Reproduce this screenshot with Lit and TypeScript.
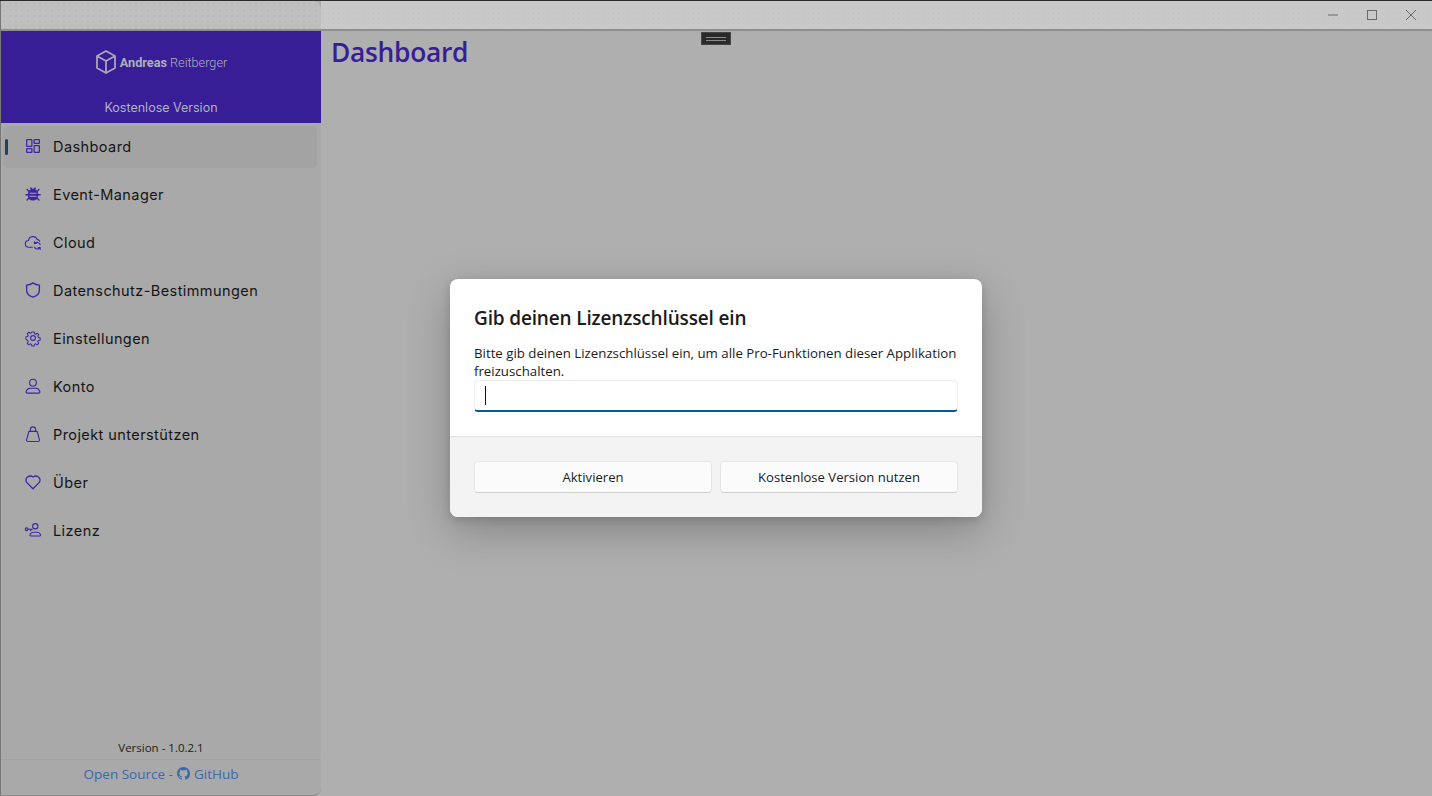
import { LitElement, html, css, svg } from "lit";
import { customElement } from "lit/decorators.js";

const icons: Record<string, unknown> = {
  dashboard: svg`<g stroke-width="1.700"><rect x="3.500" y="3.500" width="7" height="9" rx=".8"/><rect x="13.500" y="3.500" width="7" height="5" rx=".8"/><rect x="3.500" y="15.500" width="7" height="5" rx=".8"/><rect x="13.500" y="11.500" width="7" height="9" rx=".8"/></g>`,
  bug: svg`<g stroke-width="1.800"><path d="M4 6l3 3M20 6l-3 3M2.500 13H6M21.500 13H18M4 20l3-3M20 20l-3-3M9 4l1.500 2M15 4l-1.500 2"/></g><path class="fill" d="M12 5.500c3.500 0 6 2.800 6 6.500v2c0 3.600-2.500 6-6 6s-6-2.400-6-6v-2c0-3.700 2.500-6.500 6-6.500z"/><path stroke="#a9a9a9" stroke-width="1.500" d="M8 11h8M8 15h8"/>`,
  cloud: svg`<path d="M11 19H6.500A4.500 4.500 0 0 1 6 10a6 6 0 0 1 11.500-1.500A4.500 4.500 0 0 1 21 11"/><path d="M21.500 15.500a4 4 0 0 0-7-1.500M14 19a4 4 0 0 0 7 .5"/><path d="M14 11.500V14h2.500M21.500 22v-2.500H19"/>`,
  shield: svg`<path d="M12 2.500c2.500 2 5.500 3 8.500 3v6c0 5-3.500 8.500-8.500 10-5-1.500-8.500-5-8.500-10v-6c3 0 6-1 8.500-3z" stroke-width="1.800"/>`,
  gear: svg`<circle cx="12" cy="12" r="3.200"/><path d="M10.300 3h3.400l.5 2.600 1.800.8 2.200-1.500 2.400 2.400-1.500 2.200.8 1.800 2.600.5v3.400l-2.600.5-.8 1.800 1.500 2.200-2.400 2.400-2.200-1.500-1.800.8-.5 2.600h-3.400l-.5-2.600-1.800-.8-2.200 1.500-2.400-2.400 1.500-2.200-.8-1.800L1.500 13.700v-3.400l2.600-.5.800-1.800-1.500-2.200 2.400-2.400 2.200 1.500 1.800-.8z" transform="translate(1.200 1.200) scale(.9)"/>`,
  user: svg`<circle cx="12" cy="7.500" r="4.500"/><path d="M5 21.500c-2 0-2.500-1-2-2.500 .8-2.500 3-4 5.500-4h7c2.500 0 4.700 1.500 5.500 4 .5 1.500 0 2.500-2 2.500z"/>`,
  bag: svg`<path d="M6.500 8.500h11l3 11c.4 1.500-.5 2.500-2 2.500h-13c-1.500 0-2.400-1-2-2.500z"/><path d="M8.500 8.500V6a3.500 3.500 0 0 1 7 0v2.500"/>`,
  heart: svg`<path d="M12 21 3.500 12.500A5.600 5.600 0 0 1 12 5.500a5.600 5.600 0 0 1 8.500 7z" stroke-width="1.700"/>`,
  license: svg`<circle cx="15" cy="7" r="3.500"/><path d="M9.500 20c-1.500 0-2-1-1.500-2 .8-2 2.500-3 4.500-3h5c2 0 3.700 1 4.500 3 .5 1 0 2-1.500 2z"/><circle cx="3.500" cy="11" r="1.800"/><path d="M5.500 11h5.500M9 11v2"/>`,
};

const items: [string, string][] = [
  ["dashboard", "Dashboard"],
  ["bug", "Event-Manager"],
  ["cloud", "Cloud"],
  ["shield", "Datenschutz-Bestimmungen"],
  ["gear", "Einstellungen"],
  ["user", "Konto"],
  ["bag", "Projekt unterstützen"],
  ["heart", "Über"],
  ["license", "Lizenz"],
];

@customElement("app-root")
export class AppRoot extends LitElement {
  static styles = css`
    :host {
      display: block;
      position: relative;
      width: 1432px;
      height: 796px;
      overflow: hidden;
      background: #afafaf;
      font-family: "Open Sans", "Liberation Sans", sans-serif;
      color: #1a1a1a;
      box-sizing: border-box;
      border-top: 1px solid #2b2b2b;
    }
    .shell { display: flex; height: 795px; }
    .sidebar {
      width: 321px;
      flex: none;
      box-sizing: border-box;
      display: flex;
      flex-direction: column;
      background: #a9a9a9;
      border-left: 1px solid #777;
      border-bottom: 1px solid #8a8a8a;
      border-radius: 0 8px 8px 0;
      overflow: hidden;
    }
    .dragstrip {
      height: 28px;
      flex: none;
      background-color: #bfbfbf;
      background-image: radial-gradient(#b2b2b2 0.6px, transparent 0.8px);
      background-size: 6px 6px;
      border-bottom: 2px solid #8f8f8f;
    }
    .brand {
      height: 92px;
      flex: none;
      box-sizing: border-box;
      background: #371e96;
      display: flex;
      flex-direction: column;
      align-items: center;
      padding-top: 17px;
    }
    .logo {
      display: flex;
      align-items: center;
      gap: 3px;
      height: 28px;
      font-family: Roboto, sans-serif;
      font-size: 12.700px;
      color: #b0afb8;
      font-weight: 300;
    }
    .logo svg { width: 22px; height: 26px; fill: none; stroke: #a9a8b4; stroke-width: 1.800; stroke-linejoin: round; }
    .logo b { font-weight: 700; margin-right: 3px; }
    .plan {
      margin-top: 23px;
      font-family: Inter, sans-serif;
      font-size: 12.500px;
      line-height: 18px;
      color: #b3b1c2;
    }
    nav {
      flex: 1;
      display: flex;
      flex-direction: column;
      gap: 6px;
      padding: 3px 4px 0 2px;
    }
    .item {
      position: relative;
      display: flex;
      align-items: center;
      height: 42px;
      box-sizing: border-box;
      padding: 0 0 2px 21px;
      border-radius: 5px;
      font-family: Inter, sans-serif;
      font-size: 14.500px;
      letter-spacing: 0.420px;
      color: #151515;
    }
    .item.active { background: #a3a3a3; }
    .item.active::before {
      content: "";
      position: absolute;
      left: 2px;
      top: 13px;
      width: 3px;
      height: 16px;
      border-radius: 2px;
      background: #1a4466;
    }
    .item svg {
      width: 18px;
      height: 18px;
      flex: none;
      margin-right: 11px;
      fill: none;
      stroke: #3f25a5;
      stroke-width: 1.500;
      stroke-linecap: round;
      stroke-linejoin: round;
    }
    .item svg .fill { fill: #3f25a5; }
    .version {
      text-align: center;
      font-size: 11.500px;
      line-height: 16px;
      padding-bottom: 3px;
      color: #1c1c1c;
      border-bottom: 1px solid #a2a2a2;
    }
    .source {
      height: 35px;
      flex: none;
      display: flex;
      align-items: center;
      justify-content: center;
      padding-bottom: 8px;
      box-sizing: border-box;
      gap: 4px;
      font-size: 13.500px;
      color: #3c68ad;
    }
    .source svg { width: 13px; height: 13px; fill: #3c68ad; }
    .main { flex: 1; display: flex; flex-direction: column; min-width: 0; }
    .titlebar {
      height: 28px;
      flex: none;
      display: flex;
      justify-content: flex-end;
      align-items: center;
      padding-right: 2px;
      background-color: #c9c9c9;
      background-image: radial-gradient(#c2c2c2 0.6px, transparent 0.8px);
      background-size: 5px 5px;
      border-bottom: 2px solid #8f8f8f;
    }
    .wc { width: 39px; height: 28px; display: flex; align-items: center; justify-content: center; }
    .wc svg { width: 12px; height: 12px; fill: none; stroke: #6a6a6a; stroke-width: 1; }
    .content { flex: 1; position: relative; padding: 3px 10px; }
    h1 {
      margin: 0;
      font-family: "Open Sans", sans-serif;
      font-size: 26.400px;
      line-height: 36px;
      font-weight: 600;
      letter-spacing: -0.300px;
      color: #371e96;
    }
    .grip {
      position: absolute;
      left: 380px;
      top: 1px;
      width: 28px;
      height: 11px;
      background: #2a2a2a;
      border: 1px solid #444;
      display: flex;
      align-items: center;
      justify-content: center;
    }
    .grip i { display: block; width: 20px; height: 2px; border-top: 1px solid #8c8c8c; border-bottom: 1px solid #8c8c8c; }
    .overlay {
      position: absolute;
      inset: -1px 0 0 0;
      display: flex;
      align-items: center;
      justify-content: center;
    }
    .dialog {
      width: 532px;
      height: 238px;
      border-radius: 8px;
      overflow: hidden;
      display: flex;
      flex-direction: column;
      background: #fff;
      box-shadow: 0 14px 44px rgba(0, 0, 0, 0.24), 0 3px 10px rgba(0, 0, 0, 0.14);
    }
    .body {
      flex: 1;
      padding: 24px 24px 0;
      box-sizing: border-box;
      border-bottom: 1px solid #e3e3e3;
    }
    h2 {
      margin: 0 0 11px;
      font-size: 19px;
      line-height: 30px;
      font-weight: 600;
      color: #1b1b1b;
      letter-spacing: -0.150px;
    }
    p {
      margin: 0;
      font-size: 13.250px;
      line-height: 18px;
      color: #1b1b1b;
    }
    .input {
      position: relative;
      height: 32px;
      box-sizing: border-box;
      border: 1px solid #ededed;
      border-bottom: 2px solid #005a9e;
      border-radius: 4px;
    }
    .caret {
      position: absolute;
      left: 10px;
      top: 5px;
      width: 1px;
      height: 19px;
      background: #111;
    }
    .foot {
      height: 80px;
      flex: none;
      box-sizing: border-box;
      background: #f3f3f3;
      padding: 24px;
      display: grid;
      grid-template-columns: 1fr 1fr;
      gap: 8px;
    }
    .btn {
      height: 32px;
      box-sizing: border-box;
      display: flex;
      align-items: center;
      justify-content: center;
      background: #fbfbfb;
      border: 1px solid #e7e7e7;
      border-bottom-color: #cfcfcf;
      border-radius: 4px;
      font-size: 13.100px;
      color: #1b1b1b;
    }
  `;

  render() {
    return html`
      <div class="shell">
        <aside class="sidebar">
          <div class="dragstrip"></div>
          <div class="brand">
            <div class="logo">
              <svg viewBox="0 0 22 26"><path d="M11 2l9 5v12l-9 5-9-5V7zM2 7l9 5 9-5M11 12v12"/></svg>
              <span><b>Andreas</b>Reitberger</span>
            </div>
            <div class="plan">Kostenlose Version</div>
          </div>
          <nav>
            ${items.map(
              ([icon, label], i) => html`
                <div class="item ${i === 0 ? "active" : ""}">
                  <svg viewBox="0 0 24 24">${icons[icon]}</svg>${label}
                </div>
              `
            )}
          </nav>
          <div class="version">Version - 1.0.2.1</div>
          <div class="source">
            Open Source -
            <svg viewBox="0 0 16 16"><path d="M8 0C3.580 0 0 3.580 0 8c0 3.540 2.290 6.530 5.470 7.590.4.070.55-.170.55-.380v-1.340c-2.230.480-2.700-1.070-2.700-1.070-.360-.920-.890-1.170-.890-1.170-.730-.500.050-.490.050-.490.800.060 1.230.830 1.230.830.710 1.220 1.870.870 2.330.660.070-.520.280-.870.510-1.070-1.780-.200-3.640-.890-3.640-3.950 0-.870.310-1.590.820-2.150-.080-.200-.360-1.020.080-2.120 0 0 .670-.210 2.200.820A7.600 7.600 0 0 1 8 3.870c.680 0 1.360.090 2 .270 1.530-1.040 2.200-.820 2.200-.820.440 1.100.160 1.920.080 2.120.510.560.820 1.270.820 2.150 0 3.070-1.870 3.750-3.650 3.950.290.250.540.730.540 1.480v2.190c0 .210.150.460.550.380A8.010 8.010 0 0 0 16 8c0-4.420-3.580-8-8-8z"/></svg>
            GitHub
          </div>
        </aside>
        <div class="main">
          <div class="titlebar">
            <div class="wc"><svg viewBox="0 0 12 12"><path d="M1 6h10"/></svg></div>
            <div class="wc"><svg viewBox="0 0 12 12"><rect x="1.500" y="1.500" width="9" height="9"/></svg></div>
            <div class="wc"><svg viewBox="0 0 12 12"><path d="M1 1l10 10M11 1L1 11"/></svg></div>
          </div>
          <div class="content">
            <h1>Dashboard</h1>
            <div class="grip"><i></i></div>
          </div>
        </div>
      </div>
      <div class="overlay">
        <div class="dialog">
          <div class="body">
            <h2>Gib deinen Lizenzschlüssel ein</h2>
            <p>Bitte gib deinen Lizenzschlüssel ein, um alle Pro-Funktionen dieser Applikation freizuschalten.</p>
            <div class="input"><span class="caret"></span></div>
          </div>
          <div class="foot">
            <div class="btn">Aktivieren</div>
            <div class="btn">Kostenlose Version nutzen</div>
          </div>
        </div>
      </div>
    `;
  }
}
